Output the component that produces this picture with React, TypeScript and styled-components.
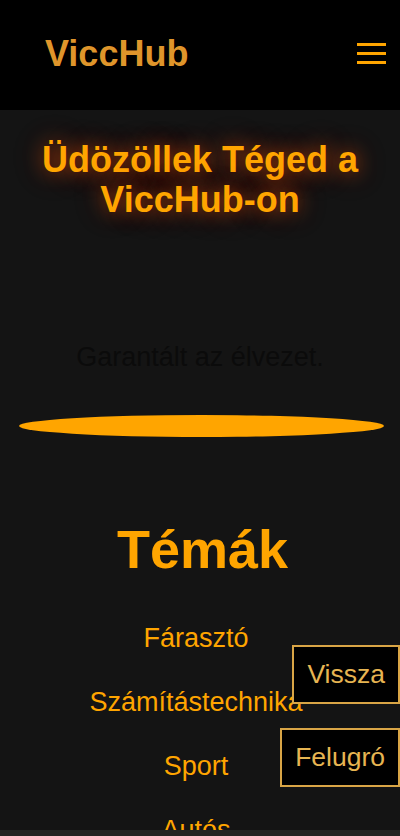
import React from "react";
import styled, { createGlobalStyle } from "styled-components";

const Global = createGlobalStyle`
  html, body {
    margin: 0;
    padding: 0;
    background: #141414;
    font-family: "Liberation Sans", Arial, sans-serif;
  }
  * { box-sizing: border-box; }
`;

const Header = styled.header`
  height: 110px;
  background: #000;
  display: flex;
  align-items: center;
  justify-content: space-between;
  padding: 0 14px 0 45px;
`;

const Logo = styled.a`
  font-size: 36px;
  font-weight: bold;
  color: #df952b;
  text-decoration: none;
  line-height: 40px;
  margin-top: -2px;
`;

const Burger = styled.button`
  width: 29px;
  height: 21px;
  padding: 0;
  margin-top: -3px;
  border: none;
  background: transparent;
  display: flex;
  flex-direction: column;
  justify-content: space-between;
  cursor: pointer;
`;

const Bar = styled.span`
  display: block;
  height: 3px;
  width: 100%;
  background: #ffa500;
`;

const Main = styled.main`
  display: flex;
  flex-direction: column;
  align-items: center;
  padding-bottom: 40px;
`;

const Title = styled.h1`
  margin: 30px 0 0;
  padding: 0 20px;
  font-size: 36px;
  line-height: 40px;
  font-weight: bold;
  color: #ffa500;
  text-align: center;
  text-shadow: 0 0 18px rgba(255, 80, 0, 0.55), 0 0 30px rgba(200, 60, 10, 0.35);
`;

const Tagline = styled.p`
  margin: 122px 0 0;
  font-size: 27px;
  line-height: 31px;
  color: #0b0b0b;
  text-align: center;
`;

const Divider = styled.div`
  align-self: flex-start;
  margin: 42px 0 0 19px;
  width: 365px;
  height: 22px;
  border-radius: 50%;
  background: #ffa500;
`;

const Topics = styled.h2`
  margin: 81px 0 0;
  padding-left: 5px;
  font-size: 54px;
  line-height: 62px;
  font-weight: bold;
  color: #ffa500;
`;

const TopicList = styled.nav`
  margin-top: 43px;
  padding-right: 8px;
  display: flex;
  flex-direction: column;
  align-items: center;
  gap: 33px;
`;

const TopicLink = styled.a`
  font-size: 27px;
  line-height: 31px;
  color: #ffa500;
  text-decoration: none;
`;

const FloatStack = styled.div`
  position: fixed;
  right: 0;
  bottom: 49px;
  display: flex;
  flex-direction: column;
  align-items: flex-end;
  gap: 24px;
`;

const FloatButton = styled.button`
  background: #000;
  border: 2px solid #d9a546;
  color: #e7b552;
  font-family: "Liberation Sans", Arial, sans-serif;
  font-size: 26.5px;
  line-height: 31px;
  padding: 12px 13px;
  cursor: pointer;
`;

const BottomStrip = styled.div`
  position: fixed;
  left: 0;
  right: 0;
  bottom: 0;
  height: 6px;
  background: #232323;
`;

const topics = ["Fárasztó", "Számítástechnika", "Sport", "Autós", "Állatos", "Szőke nős"];

export default function App() {
  return (
    <>
      <Global />
      <Header>
        <Logo href="#">ViccHub</Logo>
        <Burger aria-label="Menü">
          <Bar />
          <Bar />
          <Bar />
        </Burger>
      </Header>
      <Main>
        <Title>Üdözöllek Téged a ViccHub-on</Title>
        <Tagline>Garantált az élvezet.</Tagline>
        <Divider />
        <Topics>Témák</Topics>
        <TopicList>
          {topics.map((t) => (
            <TopicLink key={t} href="#">
              {t}
            </TopicLink>
          ))}
        </TopicList>
      </Main>
      <FloatStack>
        <FloatButton>Vissza</FloatButton>
        <FloatButton>Felugró</FloatButton>
      </FloatStack>
      <BottomStrip />
    </>
  );
}
